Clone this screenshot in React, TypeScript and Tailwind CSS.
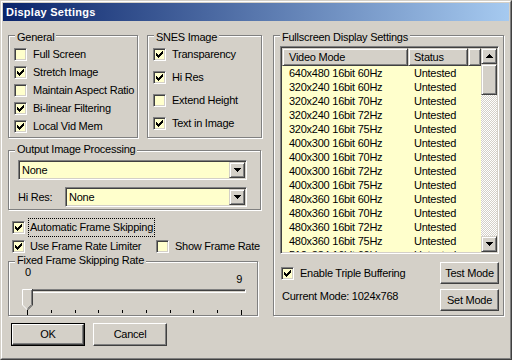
import React from "react";

const FONT = "font-['Liberation_Sans',Arial,sans-serif]";
const SUNKEN =
  "border border-t-[#808080] border-l-[#808080] border-r-white border-b-white shadow-[inset_1px_1px_0_#404040,inset_-1px_-1px_0_#D4D0C8]";
const RAISED =
  "border border-t-white border-l-white border-r-[#404040] border-b-[#404040] shadow-[inset_-1px_-1px_0_#808080]";
const RAISED2 =
  "border border-t-[#D4D0C8] border-l-[#D4D0C8] border-r-[#404040] border-b-[#404040] shadow-[inset_1px_1px_0_#fff,inset_-1px_-1px_0_#808080]";
const YELLOW = "bg-[#FFFFCC]";

function Check({ checked }: { checked: boolean }) {
  return (
    <span className={`relative inline-block w-[13px] h-[13px] shrink-0 ${YELLOW} ${SUNKEN}`}>
      {checked && (
        <svg
          className="absolute left-[2px] top-[2px]"
          width="7"
          height="7"
          viewBox="0 0 7 7"
          shapeRendering="crispEdges"
        >
          <path
            d="M6 0h1v1h-1z M5 1h2v1h-2z M0 2h1v1h-1z M4 2h3v1h-3z M0 3h2v1h-2z M3 3h3v1h-3z M0 4h5v1h-5z M1 5h3v1h-3z M2 6h1v1h-1z"
            fill="#000"
          />
        </svg>
      )}
    </span>
  );
}

function CheckRow({ checked, label, h, gap = 6 }: { checked: boolean; label: string; h: number; gap?: number }) {
  return (
    <div className="flex items-center" style={{ height: h }}>
      <Check checked={checked} />
      <span className="leading-[13px] whitespace-nowrap" style={{ marginLeft: gap }}>
        {label}
      </span>
    </div>
  );
}

function Group({
  label,
  className,
  children,
  labelTop = "-top-[7px]",
}: {
  label: string;
  className: string;
  children?: React.ReactNode;
  labelTop?: string;
}) {
  return (
    <div className={`relative border border-[#808080] shadow-[inset_1px_1px_0_#fff,1px_1px_0_#fff] ${className}`}>
      <span className={`absolute ${labelTop} left-[6px] px-[2px] bg-[#D4D0C8] leading-[13px] whitespace-nowrap`}>
        {label}
      </span>
      {children}
    </div>
  );
}

function DownArrow() {
  return (
    <svg width="7" height="4" viewBox="0 0 7 4" shapeRendering="crispEdges">
      <path d="M0 0h7v1h-7z M1 1h5v1h-5z M2 2h3v1h-3z M3 3h1v1h-1z" fill="#000" />
    </svg>
  );
}
function UpArrow() {
  return (
    <svg width="7" height="4" viewBox="0 0 7 4" shapeRendering="crispEdges">
      <path d="M3 0h1v1h-1z M2 1h3v1h-3z M1 2h5v1h-5z M0 3h7v1h-7z" fill="#000" />
    </svg>
  );
}

function Combo({ w, value }: { w: number; value: string }) {
  return (
    <div className={`flex h-[20px] ${YELLOW} ${SUNKEN} p-[1px]`} style={{ width: w }}>
      <span className="flex-1 leading-[16px] pl-[2px]">{value}</span>
      <span className={`w-[16px] h-full flex items-center justify-center bg-[#D4D0C8] ${RAISED2}`}>
        <DownArrow />
      </span>
    </div>
  );
}

function Button({ label, w, h, def }: { label: string; w: number; h: number; def?: boolean }) {
  if (def) {
    return (
      <div className="border border-black" style={{ width: w, height: h }}>
        <div className={`w-full h-full flex items-center justify-center ${RAISED}`}>{label}</div>
      </div>
    );
  }
  return (
    <div className={`flex items-center justify-center ${RAISED}`} style={{ width: w, height: h }}>
      {label}
    </div>
  );
}

const modes = [
  "640x480 16bit 60Hz",
  "320x240 16bit 60Hz",
  "320x240 16bit 70Hz",
  "320x240 16bit 72Hz",
  "320x240 16bit 75Hz",
  "400x300 16bit 60Hz",
  "400x300 16bit 70Hz",
  "400x300 16bit 72Hz",
  "400x300 16bit 75Hz",
  "480x360 16bit 60Hz",
  "480x360 16bit 70Hz",
  "480x360 16bit 72Hz",
  "480x360 16bit 75Hz",
  "512x384 16bit 60Hz",
];

export default function App() {
  return (
    <div
      className={`w-[512px] h-[360px] bg-[#D4D0C8] border border-t-[#D4D0C8] border-l-[#D4D0C8] border-r-[#404040] border-b-[#404040] text-[11px] tracking-[-0.25px] text-black ${FONT}`}
    >
      <div className="h-full border border-t-white border-l-white border-r-[#808080] border-b-[#808080] p-[1px]">
        {/* title bar */}
        <div className="h-[18px] bg-[linear-gradient(to_right,#0A246A,#A6CAF0)] flex items-center pl-[3px] text-white font-bold tracking-[0.25px]">
          Display Settings
        </div>

        {/* body */}
        <div className="flex pl-[5px] pt-[14px]">
          {/* left column */}
          <div className="w-[254px] flex flex-col">
            <div className="flex gap-[9px]">
              <Group label="General" className="w-[130px] h-[103px] pt-[9px] pl-[5px]" labelTop="-top-[5px]">
                <CheckRow checked={false} label="Full Screen" h={18} />
                <CheckRow checked={true} label="Stretch Image" h={18} />
                <CheckRow checked={false} label="Maintain Aspect Ratio" h={18} />
                <CheckRow checked={true} label="Bi-linear Filtering" h={18} />
                <CheckRow checked={true} label="Local Vid Mem" h={18} />
              </Group>
              <Group label="SNES Image" className="w-[115px] h-[103px] pt-[7px] pl-[5px]" labelTop="-top-[5px]">
                <CheckRow checked={true} label="Transparency" h={23} />
                <CheckRow checked={true} label="Hi Res" h={23} />
                <CheckRow checked={false} label="Extend Height" h={23} />
                <CheckRow checked={true} label="Text in Image" h={23} />
              </Group>
            </div>

            <Group label="Output Image Processing" className="mt-[12px] w-[253px] h-[60px] pt-[9px] pl-[9px]" labelTop="-top-[8px]">
              <Combo w={229} value="None" />
              <div className="flex items-center mt-[7px]">
                <span className="w-[47px] leading-[13px]">Hi Res:</span>
                <Combo w={182} value="None" />
              </div>
            </Group>

            <div className="mt-[8px] h-[19px] flex items-center pl-[4px]">
              <Check checked={true} />
              <span className="ml-[3px] border border-dotted border-black px-[1px] leading-[17px]">
                Automatic Frame Skipping
              </span>
            </div>
            <div className="h-[19px] flex items-center pl-[4px]">
              <div className="w-[144px] flex items-center">
                <Check checked={true} />
                <span className="ml-[5px] leading-[13px]">Use Frame Rate Limiter</span>
              </div>
              <Check checked={false} />
              <span className="ml-[6px] leading-[13px]">Show Frame Rate</span>
            </div>

            <Group label="Fixed Frame Skipping Rate" className="mt-[5px] w-[250px] h-[55px]" labelTop="-top-[8px]">
              <div className="mt-[4px] h-[16px] flex justify-between pl-[16px] pr-[15px]">
                <span className="leading-[13px]">0</span>
                <span className="leading-[13px] mt-[7px]">9</span>
              </div>
              <div className="relative h-[21px]">
                <div className={`mt-[7px] ml-[16px] w-[221px] h-[4px] ${SUNKEN}`} />
                <svg className="absolute left-[13px] top-0" width="11" height="21" viewBox="0 0 11 21">
                  <path d="M0 0H11V16L5.5 21.5L0 16Z" fill="#D4D0C8" />
                  <path d="M0.5 16V0.5H10" stroke="#fff" fill="none" />
                  <path d="M0.5 16L5.5 21" stroke="#fff" fill="none" />
                  <path d="M10.5 0V16L5.5 21" stroke="#404040" fill="none" />
                  <path d="M9.5 1V15.5L5.5 19.5" stroke="#808080" fill="none" />
                </svg>
              </div>
              <div className="ml-[18px] w-[215px] h-[6px] flex justify-between items-start">
                {Array.from({ length: 10 }).map((_, i) => (
                  <span key={i} className={`w-px bg-black ${i === 0 || i === 9 ? "h-[5px]" : "h-[3px]"}`} />
                ))}
              </div>
            </Group>

            <div className="mt-[7px] pl-[3px] flex gap-[8px]">
              <Button label="OK" w={74} h={23} def />
              <Button label="Cancel" w={74} h={23} />
            </div>
          </div>

          {/* right column */}
          <Group
            label="Fullscreen Display Settings"
            className="ml-[11px] w-[231px] h-[281px] pt-[10px] pl-[6px]"
            labelTop="-top-[5px]"
          >
            <div className={`w-[219px] h-[208px] flex ${SUNKEN} p-[1px]`}>
              <div className="w-[199px] flex flex-col overflow-hidden">
                <div className="h-[18px] flex shrink-0">
                  <div className={`w-[126px] h-full pl-[6px] leading-[16px] bg-[#D4D0C8] ${RAISED2}`}>Video Mode</div>
                  <div className={`w-[60px] h-full pl-[5px] leading-[16px] bg-[#D4D0C8] ${RAISED2}`}>Status</div>
                  <div className={`w-[13px] h-full bg-[#D4D0C8] ${RAISED2}`} />
                </div>
                <div className={`flex-1 ${YELLOW} overflow-hidden`}>
                  {modes.map((m) => (
                    <div key={m} className="h-[14px] flex leading-[14px] whitespace-nowrap">
                      <span className="w-[126px] pl-[7px]">{m}</span>
                      <span className="pl-[6px]">Untested</span>
                    </div>
                  ))}
                </div>
              </div>
              <div className="w-[16px] flex flex-col">
                <div className={`h-[16px] shrink-0 flex items-center justify-center bg-[#D4D0C8] ${RAISED2}`}>
                  <UpArrow />
                </div>
                <div className={`h-[31px] shrink-0 bg-[#D4D0C8] ${RAISED2}`} />
                <div className="flex-1 bg-[repeating-conic-gradient(#D4D0C8_0%_25%,#ffffff_0%_50%)] bg-[length:2px_2px]" />
                <div className={`h-[16px] shrink-0 flex items-center justify-center bg-[#D4D0C8] ${RAISED2}`}>
                  <DownArrow />
                </div>
              </div>
            </div>

            <div className="w-[219px] flex justify-between">
              <div className="flex flex-col">
                <div className="mt-[13px] ml-[1px] flex items-center h-[13px]">
                  <Check checked={true} />
                  <span className="ml-[6px] leading-[13px]">Enable Triple Buffering</span>
                </div>
                <span className="mt-[10px] ml-[2px] leading-[13px]">Current Mode: 1024x768</span>
              </div>
              <div className="flex flex-col mt-[8px] gap-[5px]">
                <Button label="Test Mode" w={59} h={22} />
                <Button label="Set Mode" w={59} h={22} />
              </div>
            </div>
          </Group>
        </div>
      </div>
    </div>
  );
}
